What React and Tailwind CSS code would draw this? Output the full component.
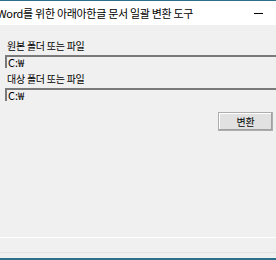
export default function App() {
  const font = { fontFamily: '"Noto Sans CJK KR", "Liberation Sans", sans-serif' }
  return (
    <div className="w-[276px] h-[260px] overflow-hidden bg-[#f0f0f0] flex flex-col" style={font}>
      {/* title bar */}
      <div className="h-[25px] bg-white border-t border-[#2b6f8a] flex items-center justify-between shrink-0">
        <span className="-ml-[3px] text-[11px] tracking-[-0.3px] text-black whitespace-nowrap leading-none">Word를 위한 아래아한글 문서 일괄 변환 도구</span>
        <span className="w-[9px] h-[1px] bg-black mr-[13px]" />
      </div>

      <div className="flex-1 flex flex-col pl-[5px]">
        <div className="mt-[15px] ml-[2px] text-[10px] tracking-[-0.25px] leading-[12px] text-black">원본 폴더 또는 파일</div>
        <div className="mt-[3px] h-[13px] w-[280px] border-t-2 border-l-2 border-[#7a7a7a] bg-[#f0f0f0] flex items-center text-[11px] leading-none pl-[1px]">C:₩</div>
        <div className="mt-[5px] ml-[2px] text-[10px] tracking-[-0.25px] leading-[12px] text-black">대상 폴더 또는 파일</div>
        <div className="mt-[3px] h-[13px] w-[280px] border-t-2 border-l-2 border-[#7a7a7a] bg-[#f0f0f0] flex items-center text-[11px] leading-none pl-[1px]">C:₩</div>
        <div className="flex justify-end mt-[11px] pr-[3px]">
          <button className="w-[55px] h-[19px] border border-[#adadad] bg-[#e1e1e1] text-[10px] tracking-[-0.25px] leading-none text-black shadow-[inset_-1px_-1px_0_#a0a0a0,inset_1px_1px_0_#fff]">변환</button>
        </div>
      </div>

      {/* status bar */}
      <div className="h-[15px] border-t border-white shrink-0" />
      <div className="h-[8px] border-t border-[#e3e3e3] border-b-2 border-b-[#2b6f8a] shrink-0" />
    </div>
  )
}
